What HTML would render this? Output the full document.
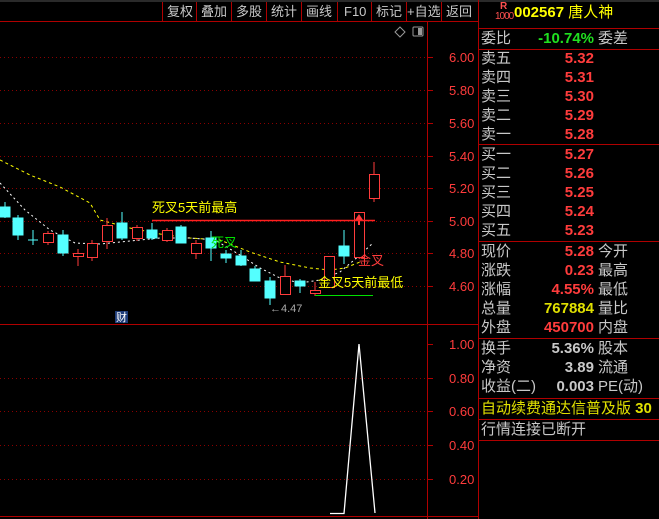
<!DOCTYPE html>
<html><head><meta charset="utf-8"><style>
body{margin:0;width:659px;height:519px;background:#000;overflow:hidden;position:relative;font-family:"Liberation Sans","Noto Sans CJK SC",sans-serif}
.r{position:absolute;left:480px;width:179px;height:19px;font-size:15px;line-height:19px;color:#c8c8c8;white-space:nowrap}
.r .l{position:absolute;left:1px}
.r .v{position:absolute;right:65px;font-family:"Liberation Sans",sans-serif;font-weight:bold;font-size:15px;color:#ff3c3c}
.r .t{position:absolute;left:118px}
.hl{position:absolute;left:478px;width:181px;height:1px;background:#b00000}
</style></head><body>
<svg width="659" height="519" style="position:absolute;left:0;top:0" font-family="Liberation Sans,Noto Sans CJK SC,sans-serif">
<line x1="0" y1="1" x2="659" y2="1" stroke="#555"/>
<line x1="0" y1="21.5" x2="478" y2="21.5" stroke="#b00000"/>
<g stroke="#b00000">
<line x1="162.5" y1="2" x2="162.5" y2="21"/><line x1="196.5" y1="2" x2="196.5" y2="21"/><line x1="231.5" y1="2" x2="231.5" y2="21"/><line x1="266.5" y1="2" x2="266.5" y2="21"/><line x1="301.5" y1="2" x2="301.5" y2="21"/><line x1="337.5" y1="2" x2="337.5" y2="21"/><line x1="371.5" y1="2" x2="371.5" y2="21"/><line x1="406.5" y1="2" x2="406.5" y2="21"/><line x1="441.5" y1="2" x2="441.5" y2="21"/>
</g>
<g fill="#c8c8c8" font-size="13">
<text x="167" y="16">复权</text><text x="201" y="16">叠加</text><text x="236" y="16">多股</text><text x="271" y="16">统计</text><text x="306" y="16">画线</text><text x="344" y="16">F10</text><text x="376" y="16">标记</text><text x="407" y="16">+自选</text><text x="446" y="16">返回</text>
</g>
<path d="M400 27 l5 5 l-5 5 l-5 -5z" fill="none" stroke="#999"/>
<rect x="413" y="27" width="10" height="9" fill="none" stroke="#999" rx="1"/><rect x="418" y="28" width="4" height="7" fill="#999"/>
<line x1="427.5" y1="22" x2="427.5" y2="519" stroke="#b00000"/>
<line x1="478.5" y1="0" x2="478.5" y2="519" stroke="#b00000"/>
<line x1="0" y1="324.5" x2="478" y2="324.5" stroke="#b00000"/>
<line x1="0" y1="516.5" x2="478" y2="516.5" stroke="#b00000"/>
<g stroke="#8a0000" stroke-dasharray="1,3">
<line x1="0" y1="57.5" x2="427" y2="57.5"/><line x1="0" y1="90.5" x2="427" y2="90.5"/><line x1="0" y1="123.5" x2="427" y2="123.5"/><line x1="0" y1="156.5" x2="427" y2="156.5"/><line x1="0" y1="188.5" x2="427" y2="188.5"/><line x1="0" y1="221.5" x2="427" y2="221.5"/><line x1="0" y1="253.5" x2="427" y2="253.5"/><line x1="0" y1="286.5" x2="427" y2="286.5"/>
<line x1="0" y1="378.5" x2="427" y2="378.5"/><line x1="0" y1="411.5" x2="427" y2="411.5"/><line x1="0" y1="445.5" x2="427" y2="445.5"/><line x1="0" y1="479.5" x2="427" y2="479.5"/>
</g>
<g stroke="#b00000">
<line x1="427" y1="57.5" x2="433" y2="57.5"/><line x1="427" y1="90.5" x2="433" y2="90.5"/><line x1="427" y1="123.5" x2="433" y2="123.5"/><line x1="427" y1="156.5" x2="433" y2="156.5"/><line x1="427" y1="188.5" x2="433" y2="188.5"/><line x1="427" y1="221.5" x2="433" y2="221.5"/><line x1="427" y1="253.5" x2="433" y2="253.5"/><line x1="427" y1="286.5" x2="433" y2="286.5"/>
<line x1="427" y1="344.5" x2="433" y2="344.5"/><line x1="427" y1="378.5" x2="433" y2="378.5"/><line x1="427" y1="411.5" x2="433" y2="411.5"/><line x1="427" y1="445.5" x2="433" y2="445.5"/><line x1="427" y1="479.5" x2="433" y2="479.5"/>
</g>
<g fill="#ff3c3c" font-size="13">
<text x="449" y="62">6.00</text><text x="449" y="95">5.80</text><text x="449" y="128">5.60</text><text x="449" y="161">5.40</text><text x="449" y="193">5.20</text><text x="449" y="226">5.00</text><text x="449" y="258">4.80</text><text x="449" y="291">4.60</text>
<text x="449" y="349">1.00</text><text x="449" y="383">0.80</text><text x="449" y="416">0.60</text><text x="449" y="450">0.40</text><text x="449" y="484">0.20</text>
</g>
<polyline points="0,160 30,175 60,187 90,203 100,220 130,228 160,234 190,238 220,240 250,252 280,262 310,268 330,270 345,268 360,262" fill="none" stroke="#ffff00" stroke-dasharray="3,3"/>
<polyline points="0,183 25,210 50,230 75,243 100,244 130,241 160,238 190,238 215,240 240,255 260,268 280,278 300,283 320,280 340,272 360,255 373,243" fill="none" stroke="#ffffff" stroke-dasharray="2,3"/>
<g fill="#54ffff" stroke="#54ffff">
<line x1="5" y1="202" x2="5" y2="218"/><rect x="0" y="207" width="10" height="10"/>
<line x1="18" y1="215" x2="18" y2="240"/><rect x="13" y="218" width="10" height="17"/>
<line x1="33" y1="230" x2="33" y2="245"/><line x1="28" y1="240" x2="38" y2="240"/>
<line x1="63" y1="230" x2="63" y2="256"/><rect x="58" y="235" width="10" height="18"/>
<line x1="122" y1="212" x2="122" y2="240"/><rect x="117" y="223" width="10" height="15"/>
<line x1="152" y1="223" x2="152" y2="240"/><rect x="147" y="230" width="10" height="8"/>
<line x1="181" y1="225" x2="181" y2="243"/><rect x="176" y="227" width="10" height="16"/>
<line x1="211" y1="231" x2="211" y2="261"/><rect x="206" y="238" width="10" height="10"/>
<line x1="226" y1="250" x2="226" y2="263"/><rect x="221" y="254" width="10" height="4"/>
<line x1="241" y1="250" x2="241" y2="266"/><rect x="236" y="256" width="10" height="9"/>
<line x1="255" y1="266" x2="255" y2="281"/><rect x="250" y="269" width="10" height="12"/>
<line x1="270" y1="277" x2="270" y2="305"/><rect x="265" y="281" width="10" height="17"/>
<line x1="300" y1="279" x2="300" y2="293"/><rect x="295" y="281" width="10" height="5"/>
<line x1="344" y1="230" x2="344" y2="264"/><rect x="339" y="246" width="10" height="10"/>
</g>
<g fill="none" stroke="#ff3c3c">
<line x1="48" y1="231" x2="48" y2="245"/><rect x="43.5" y="233.5" width="10" height="9" fill="#000"/>
<line x1="78" y1="249" x2="78" y2="266"/><rect x="73.5" y="253.5" width="10" height="3" fill="#000"/>
<line x1="92" y1="240" x2="92" y2="261"/><rect x="87.5" y="243.5" width="10" height="14" fill="#000"/>
<line x1="107" y1="218" x2="107" y2="249"/><rect x="102.5" y="225.5" width="10" height="16" fill="#000"/>
<line x1="137" y1="225" x2="137" y2="241"/><rect x="132.5" y="227.5" width="10" height="11" fill="#000"/>
<line x1="167" y1="228" x2="167" y2="242"/><rect x="162.5" y="230.5" width="10" height="10" fill="#000"/>
<line x1="196" y1="240" x2="196" y2="259"/><rect x="191.5" y="243.5" width="10" height="10" fill="#000"/>
<line x1="285" y1="265" x2="285" y2="294"/><rect x="280.5" y="276.5" width="10" height="18" fill="#000"/>
<line x1="315" y1="282" x2="315" y2="296"/><rect x="310.5" y="290.5" width="10" height="3" fill="#000"/>
<rect x="324.5" y="256.5" width="10" height="31" fill="#000"/>
<rect x="354.5" y="212.5" width="10" height="45" fill="#000"/>
<line x1="374" y1="162" x2="374" y2="202"/><rect x="369.5" y="174.5" width="10" height="24" fill="#000"/>
</g>
<path d="M359 214 l-4 6 h3 v5 h2 v-5 h3z" fill="#ff3c3c"/>
<line x1="152" y1="220.5" x2="375" y2="220.5" stroke="#ff2020" stroke-width="1.5"/>
<line x1="315" y1="295.5" x2="373" y2="295.5" stroke="#00e000"/>
<text x="152" y="212" fill="#ffff00" font-size="13">死叉5天前最高</text>
<text x="211" y="247" fill="#00e000" font-size="13">死叉</text>
<text x="358" y="265" fill="#ff3c3c" font-size="13">金叉</text>
<text x="318" y="287" fill="#ffff00" font-size="13">金叉5天前最低</text>
<text x="270" y="312" fill="#aaa" font-size="11">←4.47</text>
<rect x="115" y="311" width="13" height="12" fill="#1e3c78"/><text x="116" y="321" fill="#fff" font-size="11">财</text>
<polyline points="330,513.5 344,513.5 359,344 375,513" fill="none" stroke="#fff" stroke-width="1.3"/>
</svg>
<div style="position:absolute;left:500px;top:2px;color:#ff5050;font-size:10px;line-height:10px;font-weight:bold">R</div>
<div style="position:absolute;left:495px;top:12px;color:#ff5050;font-size:10px;line-height:10px;letter-spacing:-1px">1000</div>
<div style="position:absolute;left:514px;top:4px;color:#ffff00;font-size:15px;font-weight:bold;line-height:18px">002567 <span style="font-weight:normal">唐人神</span></div>
<div class="hl" style="top:28px"></div>
<div class="r" style="top:29px"><span class="l">委比</span><span class="v" style="color:#20e020">-10.74%</span><span class="t">委差</span></div>
<div class="hl" style="top:49px"></div>
<div class="r" style="top:49px"><span class="l">卖五</span><span class="v">5.32</span></div>
<div class="r" style="top:68px"><span class="l">卖四</span><span class="v">5.31</span></div>
<div class="r" style="top:87px"><span class="l">卖三</span><span class="v">5.30</span></div>
<div class="r" style="top:106px"><span class="l">卖二</span><span class="v">5.29</span></div>
<div class="r" style="top:125px"><span class="l">卖一</span><span class="v">5.28</span></div>
<div class="hl" style="top:144px"></div>
<div class="r" style="top:145px"><span class="l">买一</span><span class="v">5.27</span></div>
<div class="r" style="top:164px"><span class="l">买二</span><span class="v">5.26</span></div>
<div class="r" style="top:183px"><span class="l">买三</span><span class="v">5.25</span></div>
<div class="r" style="top:202px"><span class="l">买四</span><span class="v">5.24</span></div>
<div class="r" style="top:221px"><span class="l">买五</span><span class="v">5.23</span></div>
<div class="hl" style="top:241px"></div>
<div class="r" style="top:242px"><span class="l">现价</span><span class="v">5.28</span><span class="t">今开</span></div>
<div class="r" style="top:261px"><span class="l">涨跌</span><span class="v">0.23</span><span class="t">最高</span></div>
<div class="r" style="top:280px"><span class="l">涨幅</span><span class="v">4.55%</span><span class="t">最低</span></div>
<div class="r" style="top:299px"><span class="l">总量</span><span class="v" style="color:#e0e000">767884</span><span class="t">量比</span></div>
<div class="r" style="top:318px"><span class="l">外盘</span><span class="v">450700</span><span class="t">内盘</span></div>
<div class="hl" style="top:338px"></div>
<div class="r" style="top:339px"><span class="l">换手</span><span class="v" style="color:#c8c8c8">5.36%</span><span class="t">股本</span></div>
<div class="r" style="top:358px"><span class="l">净资</span><span class="v" style="color:#c8c8c8">3.89</span><span class="t">流通</span></div>
<div class="r" style="top:377px"><span class="l">收益(二)</span><span class="v" style="color:#c8c8c8">0.003</span><span class="t">PE(动)</span></div>
<div class="hl" style="top:398px"></div>
<div class="r" style="top:399px;color:#e0e000"><span class="l">自动续费通达信普及版 <b>30</b></span></div>
<div class="hl" style="top:419px"></div>
<div class="r" style="top:420px"><span class="l">行情连接已断开</span></div>
<div class="hl" style="top:440px"></div>
</body></html>
